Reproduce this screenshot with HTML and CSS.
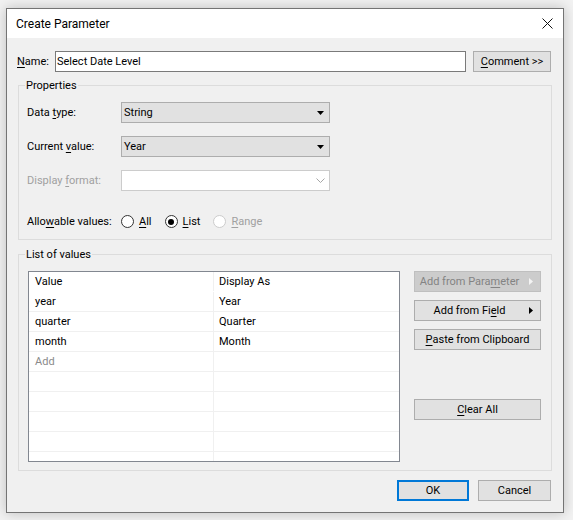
FILE: index.html
```html
<!DOCTYPE html>
<html lang="en">
<head>
    <meta charset="UTF-8">
    <meta name="viewport" content="width=device-width, initial-scale=1.0">
    <title>Create Parameter</title>
    <link rel="stylesheet" href="styles.css">
</head>
<body>
    <div class="dialog">
        <div class="titlebar">
            <span class="title">Create Parameter</span>
            <svg class="close" width="11" height="11" viewBox="0 0 11 11">
                <path d="M0.5 0.5L10.5 10.5M10.5 0.5L0.5 10.5" stroke="#111" stroke-width="1" fill="none"/>
            </svg>
        </div>

        <div class="content">
            <div class="name-row">
                <span class="name-label"><u>N</u>ame:</span>
                <div class="textbox">Select Date Level</div>
                <button class="btn comment"><u>C</u>omment &gt;&gt;</button>
            </div>

            <fieldset class="group props">
                <legend>Properties</legend>
                <div class="prop-row">
                    <span class="prop-label">Data <u>t</u>ype:</span>
                    <div class="combo">
                        <span>String</span>
                        <svg width="7" height="4" viewBox="0 0 7 4"><path d="M0 0H7L3.5 4Z" fill="#000"/></svg>
                    </div>
                </div>
                <div class="prop-row">
                    <span class="prop-label">Current <u>v</u>alue:</span>
                    <div class="combo">
                        <span>Year</span>
                        <svg width="7" height="4" viewBox="0 0 7 4"><path d="M0 0H7L3.5 4Z" fill="#000"/></svg>
                    </div>
                </div>
                <div class="prop-row">
                    <span class="prop-label disabled">Display <u>f</u>ormat:</span>
                    <div class="combo off">
                        <span></span>
                        <svg width="9" height="5" viewBox="0 0 9 5"><path d="M0.5 0.5L4.5 4.5L8.5 0.5" stroke="#a6a6a6" fill="none"/></svg>
                    </div>
                </div>
                <div class="prop-row radios">
                    <span class="prop-label">Allo<u>w</u>able values:</span>
                    <span class="radio"><span class="circle"></span><span><u>A</u>ll</span></span>
                    <span class="radio"><span class="circle on"></span><span><u>L</u>ist</span></span>
                    <span class="radio disabled"><span class="circle"></span><span><u>R</u>ange</span></span>
                </div>
            </fieldset>

            <fieldset class="group values">
                <legend>List of values</legend>
                <div class="values-body">
                    <div class="grid">
                        <div class="row head"><div class="cell">Value</div><div class="cell">Display As</div></div>
                        <div class="row"><div class="cell">year</div><div class="cell">Year</div></div>
                        <div class="row"><div class="cell">quarter</div><div class="cell">Quarter</div></div>
                        <div class="row"><div class="cell">month</div><div class="cell">Month</div></div>
                        <div class="row"><div class="cell add">Add</div><div class="cell"></div></div>
                        <div class="row"><div class="cell"></div><div class="cell"></div></div>
                        <div class="row"><div class="cell"></div><div class="cell"></div></div>
                        <div class="row"><div class="cell"></div><div class="cell"></div></div>
                        <div class="row"><div class="cell"></div><div class="cell"></div></div>
                        <div class="row"><div class="cell"></div><div class="cell"></div></div>
                    </div>

                    <div class="side">
                        <button class="btn menu off">
                            <span>Add from Para<u>m</u>eter</span>
                            <svg width="4" height="7" viewBox="0 0 4 7"><path d="M0 0L4 3.5L0 7Z" fill="#f4f4f4"/></svg>
                        </button>
                        <button class="btn menu">
                            <span>Add from Fi<u>e</u>ld</span>
                            <svg width="4" height="7" viewBox="0 0 4 7"><path d="M0 0L4 3.5L0 7Z" fill="#000"/></svg>
                        </button>
                        <button class="btn"><u>P</u>aste from Clipboard</button>
                        <button class="btn clear"><u>C</u>lear All</button>
                    </div>
                </div>
            </fieldset>

            <div class="footer">
                <button class="btn ok">OK</button>
                <button class="btn cancel">Cancel</button>
            </div>
        </div>
    </div>
</body>
</html>
```

FILE: styles.css
```css
*{
    margin: 0;
    padding: 0;
    box-sizing: border-box;
}
html,body{
    width: 100%;
    height: 100%;
}
body{
    background-color: #f2f2f2;
    font-family: Roboto, "Liberation Sans", sans-serif;
    font-size: 11px;
    color: #000;
}
u{
    text-underline-offset: 2px;
}
.dialog{
    margin: 8px 0 0 6px;
    width: 558px;
    height: 505px;
    border: 1px solid #747474;
    background-color: #f0f0f0;
    box-shadow: 0 0 12px rgba(0, 0, 0, 0.22);
    display: flex;
    flex-direction: column;
}
.titlebar{
    height: 29px;
    background-color: #fff;
    display: flex;
    align-items: center;
    justify-content: space-between;
    padding: 0 10px 0 9px;
}
.title{
    font-size: 12px;
}
.content{
    flex: 1;
    padding: 13px 11px 0 10px;
}

/* name row */
.name-row{
    display: flex;
    align-items: center;
    height: 21px;
}
.name-label{
    width: 38px;
}
.textbox{
    width: 411px;
    height: 21px;
    border: 1px solid #7a7a7a;
    background-color: #fff;
    padding-left: 1px;
    line-height: 19px;
}
.btn{
    font: inherit;
    color: #000;
    background-color: #e1e1e1;
    border: 1px solid #adadad;
    height: 21px;
    display: flex;
    align-items: center;
    justify-content: center;
}
.comment{
    width: 78px;
    margin-left: 7px;
}

/* group boxes */
.group{
    border: 1px solid #dcdcdc;
    margin-left: 1px;
    width: 534px;
}
.group legend{
    margin-left: 6px;
    padding: 0 1px;
    line-height: 15px;
}
.props{
    margin-top: 6px;
    padding: 9px 0 7px 0;
}
.prop-row{
    display: flex;
    align-items: center;
    height: 21px;
    margin: 0 0 13px 8px;
}
.prop-row:nth-of-type(3){
    margin-bottom: 20px;
}
.prop-row.radios{
    margin-bottom: 0;
}
.prop-label{
    width: 94px;
}
.disabled{
    color: #a0a0a0;
}
.combo{
    width: 209px;
    height: 21px;
    background-color: #e1e1e1;
    border: 1px solid #adadad;
    display: flex;
    align-items: center;
    justify-content: space-between;
    padding: 0 5px 0 2px;
}
.combo.off{
    background-color: #fff;
    border-color: #cccccc;
    padding-right: 4px;
}
.radio{
    display: flex;
    align-items: center;
    gap: 5px;
    margin-right: 13px;
}
.circle{
    width: 13px;
    height: 13px;
    border: 1px solid #333;
    border-radius: 50%;
    background-color: #fff;
    display: flex;
    align-items: center;
    justify-content: center;
}
.circle.on::after{
    content: "";
    width: 6px;
    height: 6px;
    border-radius: 50%;
    background-color: #000;
}
.radio.disabled .circle{
    border-color: #cccccc;
}

/* list of values */
.values{
    margin-top: 7px;
    padding: 9px 0 8px 0;
}
.values-body{
    display: flex;
    margin-left: 9px;
}
.grid{
    width: 372px;
    height: 191px;
    border: 1px solid #828790;
    background-color: #fff;
    overflow: hidden;
}
.row{
    display: flex;
    height: 20px;
    border-bottom: 1px solid #f0f0f0;
}
.row.head{
    border-bottom-color: #fff;
}
.cell{
    width: 185px;
    border-right: 1px solid #f0f0f0;
    padding: 1px 0 0 6px;
    line-height: 18px;
}
.cell + .cell{
    flex: 1;
    border-right: 0;
    padding-left: 5px;
}
.cell.add{
    color: #8a8a8a;
}
.side{
    margin-left: 14px;
    width: 127px;
    display: flex;
    flex-direction: column;
    gap: 8px;
}
.btn.menu{
    padding-right: 7px;
}
.btn.menu span{
    flex: 1;
    text-align: center;
    margin-right: 5px;
}
.btn.off{
    background-color: #cccccc;
    border-color: #bfbfbf;
    color: #838383;
}
.btn.clear{
    margin-top: 41px;
}

/* footer */
.footer{
    display: flex;
    justify-content: flex-end;
    margin-top: 9px;
}
.ok{
    width: 72px;
    margin-right: 9px;
    border: 2px solid #0078d7;
}
.cancel{
    width: 73px;
    margin-right: 1px;
}
```
